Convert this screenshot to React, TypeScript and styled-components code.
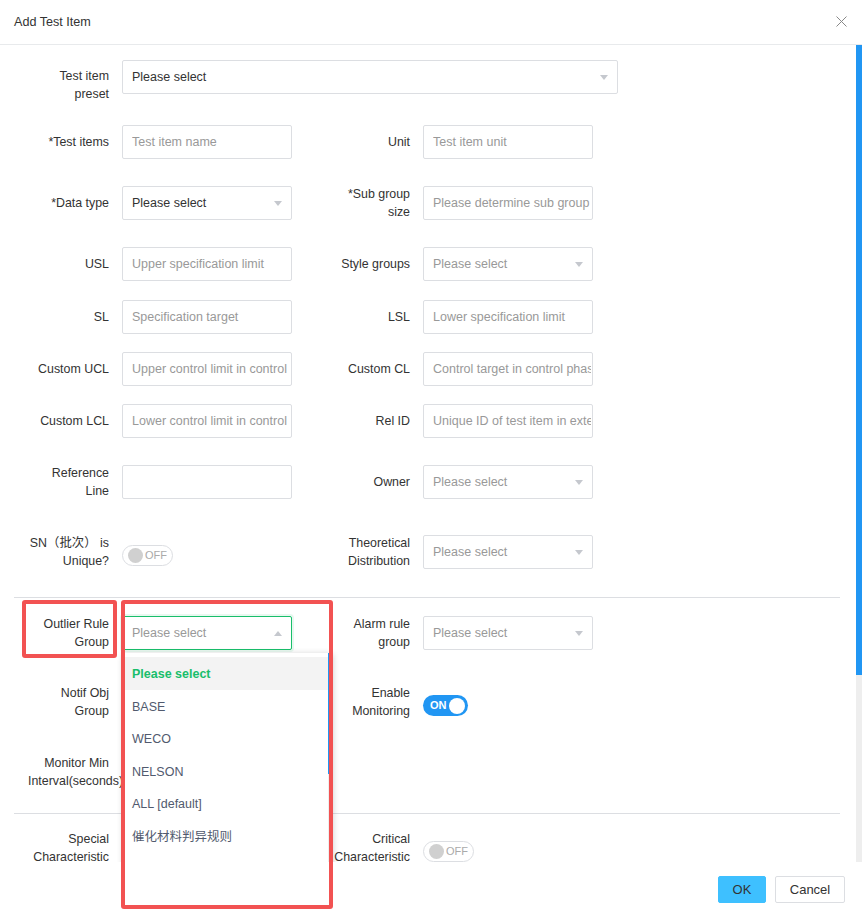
import React from "react";
import styled, { createGlobalStyle, css } from "styled-components";

const GlobalStyle = createGlobalStyle`
  html, body { margin: 0; padding: 0; background: #fff; }
  body {
    font-family: "Liberation Sans", Arial, "Noto Sans CJK SC", sans-serif;
    color: #333;
  }
  * { box-sizing: border-box; }
`;

const FONT = `"Liberation Sans", Arial, "Noto Sans CJK SC", sans-serif`;

const Modal = styled.div`
  position: relative;
  width: 862px;
  height: 913px;
  display: flex;
  flex-direction: column;
  background: #fff;
  overflow: hidden;
`;

const Header = styled.header`
  flex: none;
  height: 45px;
  display: flex;
  align-items: center;
  justify-content: space-between;
  padding: 0 15px 1px 14px;
  border-bottom: 1px solid #e8eaec;
`;

const Title = styled.h1`
  margin: 0;
  font-size: 12.6px;
  font-weight: normal;
  color: #333;
`;

const CloseButton = styled.button`
  border: 0;
  padding: 0;
  background: none;
  display: flex;
  cursor: pointer;
`;

const Body = styled.div`
  flex: 1;
  display: flex;
  min-height: 0;
`;

const Content = styled.div`
  flex: 1;
  overflow: hidden;
  padding: 15px 16px 0 14px;
`;

const Rail = styled.div<{ $w: number }>`
  flex: none;
  width: ${(p) => p.$w}px;
  background: #eeeeee;
`;

const Thumb = styled.div<{ $h: number }>`
  height: ${(p) => p.$h}px;
  background: #2196f3;
`;

const Row = styled.div<{ $after: number }>`
  display: flex;
  align-items: center;
  gap: 23px;
  height: 34px;
  margin-bottom: ${(p) => p.$after}px;
`;

const Item = styled.div`
  display: flex;
  align-items: center;
  padding-left: 14px;
  width: 278px;
  flex: none;
`;

const WideItem = styled(Item)`
  width: auto;
`;

const Label = styled.label<{ $drop?: number }>`
  flex: none;
  width: 81px;
  margin-right: 13px;
  padding-top: ${(p) => p.$drop ?? 0}px;
  text-align: right;
  font-size: 12.4px;
  line-height: 18px;
  color: #333;
`;

const TextInput = styled.input`
  flex: none;
  width: 170px;
  height: 34px;
  padding: 0 1px 0 9px;
  border: 1px solid #dcdee2;
  border-radius: 2px;
  background: #fff;
  font: 12.5px ${FONT};
  color: #333;
  outline: none;
  &::placeholder { color: #999; }
`;

const SelectBox = styled.div<{ $w?: number; $active?: boolean }>`
  position: relative;
  flex: none;
  width: ${(p) => p.$w ?? 170}px;
  height: 34px;
  display: flex;
  align-items: center;
  justify-content: space-between;
  padding: 0 9px;
  border: 1px solid ${(p) => (p.$active ? "#19be6b" : "#dcdee2")};
  border-radius: 2px;
  background: #fff;
  ${(p) =>
    p.$active &&
    css`
      box-shadow: 0 0 0 2px rgba(25, 190, 107, 0.1);
    `}
`;

const SelectText = styled.span<{ $filled?: boolean }>`
  font-size: 12.5px;
  white-space: nowrap;
  color: ${(p) => (p.$filled ? "#333" : "#999")};
`;

const Caret = styled.span<{ $up?: boolean }>`
  width: 0;
  height: 0;
  border-left: 4.5px solid transparent;
  border-right: 4.5px solid transparent;
  ${(p) =>
    p.$up
      ? css`border-bottom: 5px solid #c5c8ce;`
      : css`border-top: 5px solid #c5c8ce;`}
`;

const Dropdown = styled.div`
  position: absolute;
  top: calc(100% + 4px);
  left: 0;
  width: 210px;
  height: 262px;
  display: flex;
  background: #fff;
  border-radius: 2px;
  box-shadow: 0 1px 6px rgba(0, 0, 0, 0.2);
  z-index: 10;
`;

const OptionList = styled.ul`
  flex: 1;
  margin: 0;
  padding: 4px 0 0;
  list-style: none;
`;

const Option = styled.li<{ $selected?: boolean }>`
  height: 32.5px;
  line-height: 34px;
  padding: 0 9px;
  font-size: 12.5px;
  white-space: nowrap;
  color: #515a6e;
  ${(p) =>
    p.$selected &&
    css`
      color: #19be6b;
      font-weight: bold;
      background: #f3f3f3;
    `}
`;

const Switch = styled.span<{ $on?: boolean; $w: number }>`
  flex: none;
  display: inline-flex;
  align-items: center;
  justify-content: space-between;
  flex-direction: ${(p) => (p.$on ? "row-reverse" : "row")};
  width: ${(p) => p.$w}px;
  height: 21px;
  margin-top: 7px;
  border-radius: 11px;
  ${(p) =>
    p.$on
      ? css`
          background: #2196f3;
          padding: 0 3px 0 7px;
        `
      : css`
          background: #fff;
          border: 1px solid #dcdee2;
          padding: 0 5px 0 5px;
        `}
`;

const Knob = styled.span<{ $on?: boolean }>`
  width: ${(p) => (p.$on ? 16 : 15)}px;
  height: ${(p) => (p.$on ? 16 : 15)}px;
  border-radius: 50%;
  background: ${(p) => (p.$on ? "#fff" : "#d0d0d0")};
`;

const SwitchText = styled.span<{ $on?: boolean }>`
  font-size: 11px;
  line-height: 1;
  ${(p) =>
    p.$on
      ? css`
          color: #fff;
          font-weight: bold;
        `
      : css`
          color: #aaa;
        `}
`;

const Divider = styled.hr<{ $after: number }>`
  margin: 0 0 ${(p) => p.$after}px;
  border: 0;
  height: 1px;
  background: #dcdee2;
`;

const Footer = styled.footer`
  flex: none;
  height: 51px;
  display: flex;
  justify-content: flex-end;
  align-items: flex-start;
  gap: 9px;
  padding: 14px 17px 0 0;
`;

const Button = styled.button<{ $primary?: boolean }>`
  height: 27px;
  padding: 0;
  width: ${(p) => (p.$primary ? 48 : 70)}px;
  border-radius: 2px;
  font: 13px ${FONT};
  color: #333;
  cursor: pointer;
  ${(p) =>
    p.$primary
      ? css`
          background: #3ec0ff;
          border: 1px solid #3ec0ff;
        `
      : css`
          background: #fff;
          border: 1px solid #dcdee2;
        `}
`;

const Mark = styled.div<{ $x: number; $y: number; $w: number; $h: number }>`
  position: absolute;
  left: ${(p) => p.$x}px;
  top: ${(p) => p.$y}px;
  width: ${(p) => p.$w}px;
  height: ${(p) => p.$h}px;
  border: 4px solid #f25252;
  border-radius: 3px;
  pointer-events: none;
  z-index: 20;
`;

const Select = ({ text = "Please select", filled, w }: { text?: string; filled?: boolean; w?: number }) => (
  <SelectBox $w={w}>
    <SelectText $filled={filled}>{text}</SelectText>
    <Caret />
  </SelectBox>
);

const Toggle = ({ on, w }: { on?: boolean; w: number }) => (
  <Switch $on={on} $w={w}>
    <Knob $on={on} />
    <SwitchText $on={on}>{on ? "ON" : "OFF"}</SwitchText>
  </Switch>
);

const ruleGroups = ["Please select", "BASE", "WECO", "NELSON", "ALL [default]", "催化材料判异规则"];

export default function App() {
  return (
    <>
      <GlobalStyle />
      <Modal>
        <Header>
          <Title>Add Test Item</Title>
          <CloseButton aria-label="close">
            <svg width="11" height="11" viewBox="0 0 11 11">
              <path d="M0.5 0.5 L10.5 10.5 M10.5 0.5 L0.5 10.5" stroke="#888" strokeWidth="1" fill="none" />
            </svg>
          </CloseButton>
        </Header>

        <Body>
          <Content>
            <Row $after={31}>
              <WideItem>
                <Label $drop={16}>Test item preset</Label>
                <Select filled w={496} />
              </WideItem>
            </Row>

            <Row $after={27}>
              <Item>
                <Label>*Test items</Label>
                <TextInput placeholder="Test item name" />
              </Item>
              <Item>
                <Label>Unit</Label>
                <TextInput placeholder="Test item unit" />
              </Item>
            </Row>

            <Row $after={27}>
              <Item>
                <Label>*Data type</Label>
                <Select filled />
              </Item>
              <Item>
                <Label>*Sub group size</Label>
                <TextInput placeholder="Please determine sub group size" />
              </Item>
            </Row>

            <Row $after={19}>
              <Item>
                <Label>USL</Label>
                <TextInput placeholder="Upper specification limit" />
              </Item>
              <Item>
                <Label>Style groups</Label>
                <Select />
              </Item>
            </Row>

            <Row $after={18}>
              <Item>
                <Label>SL</Label>
                <TextInput placeholder="Specification target" />
              </Item>
              <Item>
                <Label>LSL</Label>
                <TextInput placeholder="Lower specification limit" />
              </Item>
            </Row>

            <Row $after={18}>
              <Item>
                <Label>Custom UCL</Label>
                <TextInput placeholder="Upper control limit in control phase" />
              </Item>
              <Item>
                <Label>Custom CL</Label>
                <TextInput placeholder="Control target in control phase" />
              </Item>
            </Row>

            <Row $after={27}>
              <Item>
                <Label>Custom LCL</Label>
                <TextInput placeholder="Lower control limit in control phase" />
              </Item>
              <Item>
                <Label>Rel ID</Label>
                <TextInput placeholder="Unique ID of test item in external system" />
              </Item>
            </Row>

            <Row $after={36}>
              <Item>
                <Label>Reference Line</Label>
                <TextInput />
              </Item>
              <Item>
                <Label>Owner</Label>
                <Select />
              </Item>
            </Row>

            <Row $after={28}>
              <Item>
                <Label>SN（批次） is Unique?</Label>
                <Toggle w={51} />
              </Item>
              <Item>
                <Label>Theoretical Distribution</Label>
                <Select />
              </Item>
            </Row>

            <Divider $after={18} />

            <Row $after={35}>
              <Item>
                <Label>Outlier Rule Group</Label>
                <SelectBox $active>
                  <SelectText>Please select</SelectText>
                  <Caret $up />
                  <Dropdown>
                    <OptionList>
                      {ruleGroups.map((g, i) => (
                        <Option key={g} $selected={i === 0}>
                          {g}
                        </Option>
                      ))}
                    </OptionList>
                    <Rail $w={5}>
                      <Thumb $h={121} />
                    </Rail>
                  </Dropdown>
                </SelectBox>
              </Item>
              <Item>
                <Label>Alarm rule group</Label>
                <Select />
              </Item>
            </Row>

            <Row $after={36}>
              <Item>
                <Label>Notif Obj Group</Label>
                <Select />
              </Item>
              <Item>
                <Label>Enable Monitoring</Label>
                <Toggle on w={45} />
              </Item>
            </Row>

            <Row $after={24}>
              <Item>
                <Label>Monitor Min Interval(seconds)</Label>
                <TextInput />
              </Item>
            </Row>

            <Divider $after={17} />

            <Row $after={24}>
              <Item>
                <Label>Special Characteristic</Label>
                <Toggle w={51} />
              </Item>
              <Item>
                <Label>Critical Characteristic</Label>
                <Toggle w={51} />
              </Item>
            </Row>
          </Content>
          <Rail $w={6}>
            <Thumb $h={630} />
          </Rail>
        </Body>

        <Footer>
          <Button $primary>OK</Button>
          <Button>Cancel</Button>
        </Footer>

        <Mark $x={22} $y={600} $w={95} $h={58} />
        <Mark $x={121} $y={600} $w={212} $h={309} />
      </Modal>
    </>
  );
}
